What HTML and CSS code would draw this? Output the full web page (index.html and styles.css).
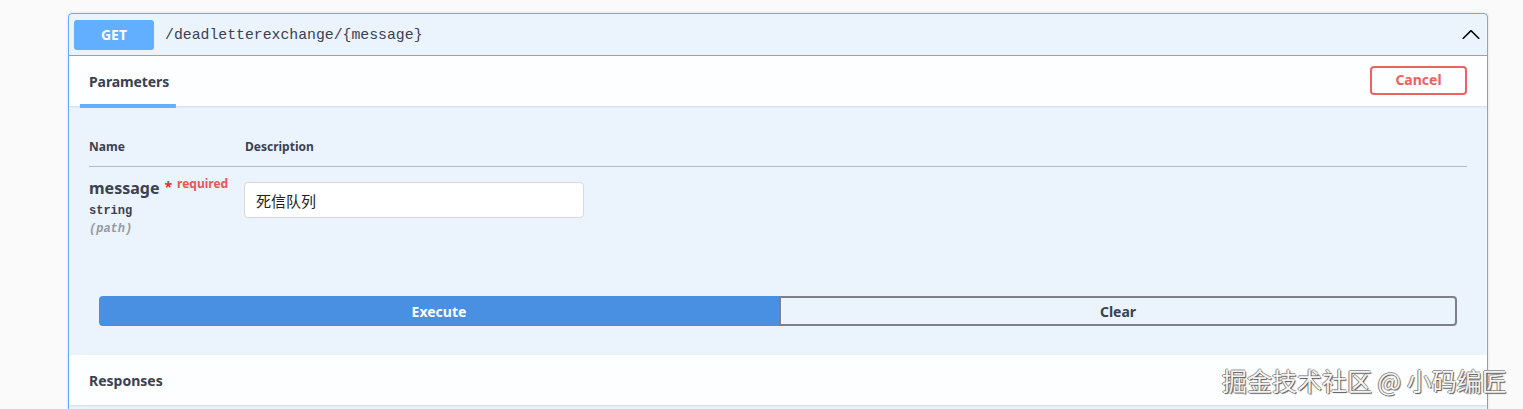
FILE: index.html
```html
<!DOCTYPE html>
<html lang="zh">
<head>
<meta charset="utf-8">
<title>Swagger op</title>
<link rel="stylesheet" href="styles.css">
</head>
<body>
<div class="opblock">
  <div class="summary">
    <span class="method">GET</span>
    <span class="path">/deadletterexchange/{message}</span>
    <svg class="arrow" width="20" height="20" viewBox="0 0 20 20"><path d="M17.418 13.891c.272.268.709.268.979 0s.271-.701 0-.969l-7.908-7.83c-.27-.268-.707-.268-.979 0l-7.908 7.83c-.27.268-.27.701 0 .969s.709.268.979 0L10 6.75l7.418 7.141z" fill="#000"/></svg>
  </div>
  <div class="section-header">
    <div class="tab"><span class="tab-label">Parameters</span></div>
    <button class="cancel">Cancel</button>
  </div>
  <div class="params">
    <div class="ptable">
      <div class="prow phead">
        <div class="col-name">Name</div>
        <div class="col-desc">Description</div>
      </div>
      <div class="prow pbody">
        <div class="col-name">
          <div class="pname">message<span class="star">*</span><span class="req">required</span></div>
          <div class="ptype">string</div>
          <div class="pin">(path)</div>
        </div>
        <div class="col-desc">
          <div class="input">死信队列</div>
        </div>
      </div>
    </div>
    <div class="btn-group">
      <button class="execute">Execute</button>
      <button class="clear">Clear</button>
    </div>
  </div>
  <div class="section-header resp">
    <span class="resp-label">Responses</span>
  </div>
</div>
<div class="watermark">掘金技术社区 @ 小码编匠</div>
</body>
</html>
```

FILE: styles.css
```css
html, body {
  margin: 0;
  padding: 0;
  background: #fafafa;
  height: 409px;
  overflow: hidden;
}
body {
  font-family: "Noto Sans", "Noto Sans CJK SC", sans-serif;
  color: #3b4151;
  position: relative;
}
.opblock {
  margin: 13px 35px 0 68px;
  border: 1px solid #61affe;
  border-radius: 4px;
  background: #ebf3fd;
  height: 420px;
  box-shadow: 0 0 3px rgba(0,0,0,.12);
}
.summary {
  display: flex;
  align-items: center;
  padding: 5px 6px 5px 5px;
  height: 31px;
  border-bottom: 1px solid #61affe;
}
.method {
  width: 80px;
  height: 30px;
  background: #61affe;
  border-radius: 3px;
  color: #fff;
  font-weight: 700;
  font-size: 14px;
  display: flex;
  align-items: center;
  justify-content: center;
}
.path {
  margin-left: 11px;
  font-family: "Liberation Mono", "DejaVu Sans Mono", monospace;
  font-size: 14.8px;
  color: #3b4151;
  flex: 1;
}
.section-header {
  display: flex;
  align-items: center;
  justify-content: space-between;
  height: 50px;
  padding: 0 20px;
  background: rgba(255,255,255,.85);
  box-shadow: 0 1px 2px rgba(0,0,0,.1);
}
.tab {
  position: relative;
}
.tab-label {
  position: relative;
  font-size: 14px;
  font-weight: 700;
  color: #3b4151;
  letter-spacing: -0.1px;
}
.tab-label::after {
  content: "";
  position: absolute;
  left: 50%;
  transform: translateX(-50%);
  width: 120%;
  height: 4px;
  bottom: -17px;
  margin-left: -1px;
  background: #61affe;
}
.cancel {
  width: 97px;
  height: 29px;
  border: 2px solid #f06060;
  border-radius: 4px;
  background: transparent;
  color: #f06060;
  font-family: "Noto Sans", sans-serif;
  font-weight: 700;
  font-size: 14px;
  padding: 0 0 2px;
  margin-top: -1px;
}
.params {
  margin-top: 1px;
  height: 248px;
}
.ptable {
  padding: 20px 20px 0;
}
.prow {
  display: flex;
}
.col-name {
  width: 156px;
}
.col-desc {
  flex: 1;
}
.phead {
  padding: 12px 0;
  height: 15px;
  font-size: 12px;
  font-weight: 700;
  line-height: 15px;
  border-bottom: 1px solid #b3b8c2;
}
.pbody {
  padding: 10px 0;
  height: 79px;
}
.pname {
  font-size: 16px;
  font-weight: 700;
  line-height: 22px;
}
.star {
  color: #e03030;
  font-size: 14px;
  margin-left: 5px;
  position: relative;
  top: -2px;
}
.req {
  color: #f05454;
  font-size: 12px;
  margin-left: 5px;
  position: relative;
  top: -6px;
}
.ptype {
  font-family: "Liberation Mono", "DejaVu Sans Mono", monospace;
  font-size: 12px;
  font-weight: 700;
  line-height: 18px;
  margin-top: 1px;
}
.pin {
  font-family: "Liberation Mono", "DejaVu Sans Mono", monospace;
  font-size: 12px;
  font-style: italic;
  font-weight: 700;
  color: #959aa3;
  line-height: 18px;
}
.input {
  margin-top: 5px;
  margin-left: -1px;
  border: 1px solid #d9d9d9;
  border-radius: 4px;
  background: #fff;
  display: flex;
  align-items: center;
  padding-left: 11px;
  box-sizing: border-box;
  width: 340px;
  height: 36px;
  font-family: "Noto Sans CJK SC", sans-serif;
  font-size: 15px;
  color: #222;
}
.btn-group {
  display: flex;
  padding: 30px;
}
.execute, .clear {
  height: 30px;
  font-family: "Noto Sans", sans-serif;
  font-weight: 700;
  font-size: 14px;
  padding: 0;
  box-sizing: border-box;
}
.execute {
  flex: 0 0 680px;
  background: #4990e2;
  color: #fff;
  border: 0;
  border-radius: 4px 0 0 4px;
}
.clear {
  flex: 1;
  background: transparent;
  color: #3b4151;
  border: 2px solid #7d8088;
  border-radius: 0 4px 4px 0;
}
.resp {
  justify-content: flex-start;
}
.resp-label {
  font-size: 14px;
  font-weight: 700;
}
.watermark {
  position: absolute;
  left: 1222px;
  top: 364px;
  font-family: "Noto Sans CJK SC", sans-serif;
  font-size: 25px;
  line-height: 32px;
  color: #f4f4f4;
  text-shadow: 1px 1px 1px #555, -1px 0 0 #888, 0 -1px 0 #999;
  white-space: nowrap;
}
```
